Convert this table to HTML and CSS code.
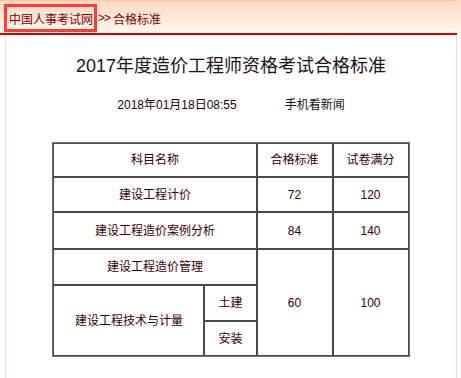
FILE: index.html
```html
<!DOCTYPE html>
<html lang="zh-CN">
<head>
<meta charset="utf-8">
<title>2017年度造价工程师资格考试合格标准</title>
<link rel="stylesheet" href="styles.css">
</head>
<body>
<div class="top">
  <div class="crumbs">
    <a class="home">中国人事考试网</a><span class="sep">&gt;&gt;</span><span class="cur">合格标准</span>
  </div>
</div>
<div class="main">
  <h1 class="title">2017年度造价工程师资格考试合格标准</h1>
  <div class="meta">
    <span class="date">2018年01月18日08:55</span>
    <span class="mobile">手机看新闻</span>
  </div>
  <table class="grade">
    <colgroup>
      <col class="c1"><col class="c2"><col class="c3"><col class="c4">
    </colgroup>
    <tr class="r1"><td colspan="2">科目名称</td><td>合格标准</td><td>试卷满分</td></tr>
    <tr class="r2"><td colspan="2">建设工程计价</td><td>72</td><td>120</td></tr>
    <tr class="r3"><td colspan="2">建设工程造价案例分析</td><td>84</td><td>140</td></tr>
    <tr class="r4"><td colspan="2">建设工程造价管理</td><td rowspan="3">60</td><td rowspan="3">100</td></tr>
    <tr class="r5"><td rowspan="2">建设工程技术与计量</td><td>土建</td></tr>
    <tr class="r6"><td>安装</td></tr>
  </table>
</div>
</body>
</html>
```
FILE: styles.css
```css
html, body {
  margin: 0;
  padding: 0;
  background: #fff;
}
body {
  font-family: "Liberation Sans", "Noto Sans CJK SC", sans-serif;
  font-size: 12px;
  color: #330000;
  width: 461px;
  height: 378px;
  overflow: hidden;
}
.top {
  height: 33px;
  width: 457px;
  border-top: 1px solid #ffc29e;
  background: linear-gradient(#ffd9c0, #fff7f0);
  border-bottom: 2px solid #cc0000;
  box-sizing: border-box;
  height: 35px;
  padding: 3px 0 0 4px;
  position: relative;
}
.top::after {
  content: "";
  position: absolute;
  left: 457px;
  top: -1px;
  width: 4px;
  height: 34px;
  background: linear-gradient(#ffd9c0, #fff7f0);
}
.crumbs {
  display: flex;
  align-items: center;
  height: 28px;
  color: #7a0000;
  font-size: 12px;
}
.home {
  display: flex;
  align-items: center;
  box-sizing: border-box;
  height: 28px;
  width: 93px;
  border: 3px solid #ff3a3a;
  padding-left: 2px;
  color: #7a0000;
}
.sep {
  margin-left: 1px;
  margin-right: 3px;
  letter-spacing: -1px;
}
.main {
  margin-left: 5px;
  width: 450px;
  height: 343px;
  border-left: 1px solid #f6d9c0;
  border-right: 1px solid #f6d9c0;
  box-sizing: content-box;
  overflow: hidden;
}
.title {
  margin: 0;
  padding-top: 18px;
  font-size: 18px;
  line-height: 26px;
  font-weight: normal;
  text-align: center;
  color: #1c0f1c;
}
.meta {
  margin-top: 14px;
  height: 20px;
  display: flex;
  justify-content: center;
  align-items: center;
  gap: 48px;
  color: #220000;
}
.date {
  font-size: 12px;
}
.mobile {
  font-size: 12px;
  color: #111;
}
.grade {
  margin: 29px auto 0;
  border-collapse: separate;
  border-spacing: 0;
  border: 1px solid #707070;
  table-layout: fixed;
  width: 355px;
}
.c1 { width: 151px; }
.c2 { width: 52px; }
.c3 { width: 76px; }
.c4 { width: 76px; }
.grade td {
  border: 1px solid #4a4a4a;
  text-align: center;
  padding: 0;
  box-sizing: border-box;
  line-height: 16px;
}
.r1 td { height: 34px; }
.r2 td { height: 35px; }
.r3 td { height: 37px; }
.r4 td { height: 36px; }
.r5 td { height: 36px; }
.r6 td { height: 35px; }
```
